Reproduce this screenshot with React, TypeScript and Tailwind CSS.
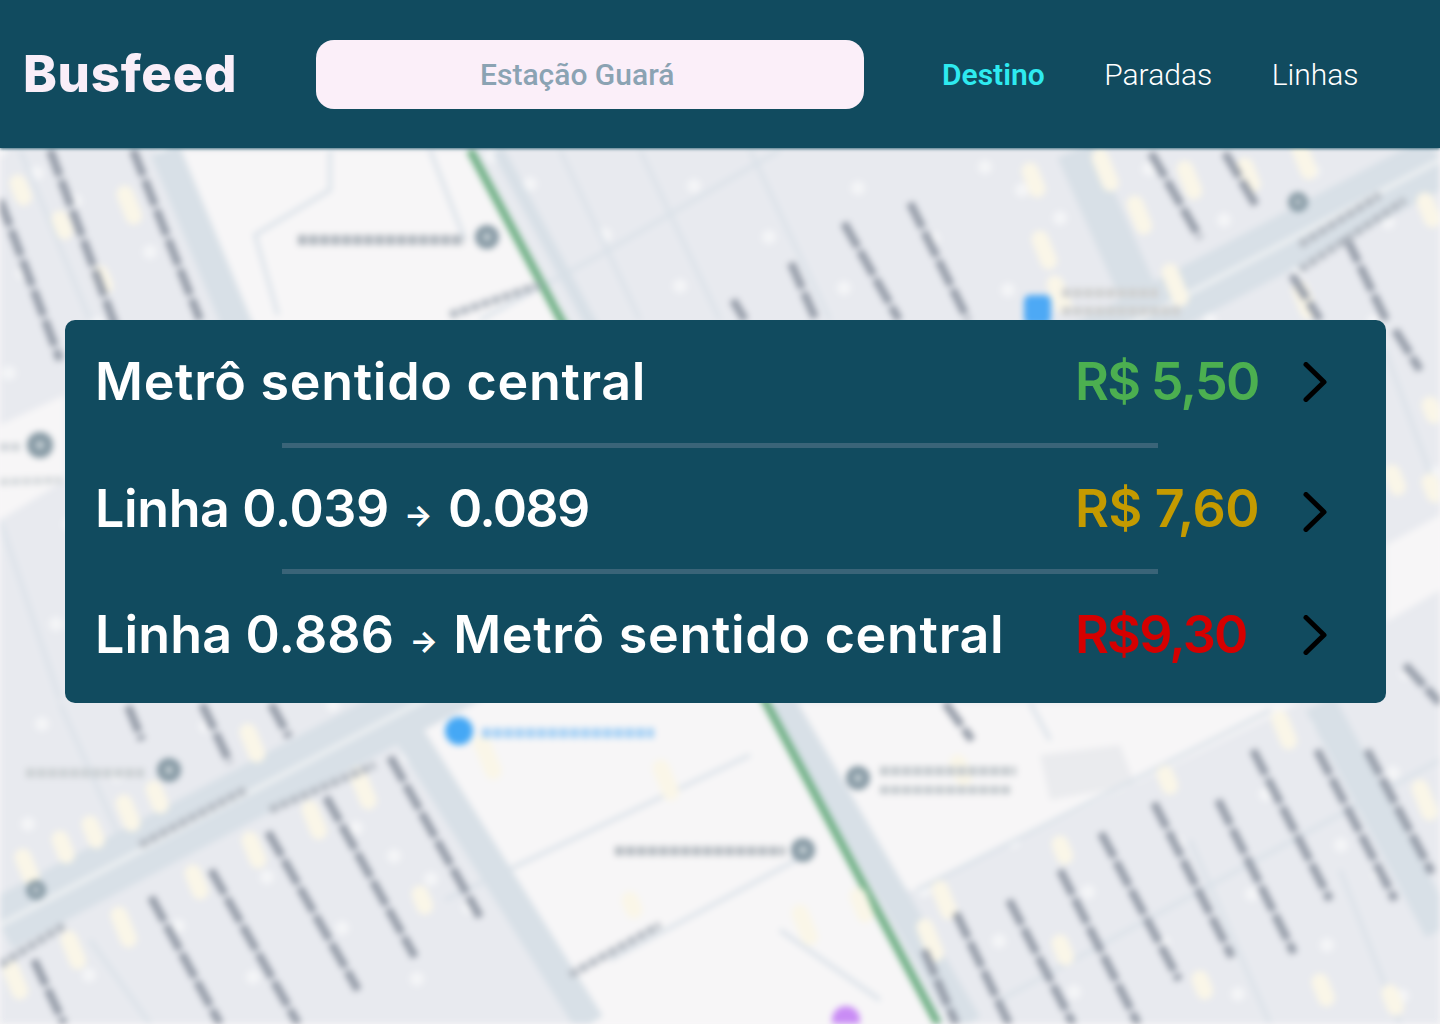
const darkLines = [
  [50, 150, 128, 360], [133, 150, 200, 320], [0, 200, 60, 360],
  [128, 706, 142, 740], [202, 704, 230, 763], [271, 704, 289, 737],
  [390, 757, 480, 917], [326, 797, 415, 957], [268, 832, 358, 990], [211, 870, 298, 1024],
  [151, 897, 220, 1024], [34, 960, 64, 1024],
  [945, 703, 972, 740], [1253, 750, 1330, 900], [1317, 750, 1395, 900], [1367, 750, 1432, 873],
  [1154, 803, 1232, 957], [1218, 800, 1294, 953], [1101, 833, 1179, 980], [1060, 870, 1138, 1024],
  [1009, 900, 1073, 1024], [956, 913, 1009, 1024], [924, 950, 956, 1024],
  [910, 203, 968, 320], [791, 263, 816, 320], [844, 223, 899, 320], [733, 300, 745, 320],
  [1151, 153, 1200, 238], [1225, 153, 1257, 207], [1346, 237, 1386, 320], [1292, 275, 1320, 320],
  [1395, 330, 1420, 370], [1405, 665, 1440, 703],
];

const thinRoads = [
  "M330 150 V190 L255 235 L278 315",
  "M430 150 L465 240",
  "M480 320 L600 255 L780 150",
  "M1271 710 L917 890",
  "M750 755 L445 900",
  "M815 850 L610 960",
  "M880 1000 L780 930",
  "M1030 703 L1050 740",
  "M1440 760 L1000 1000",
  "M560 150 L640 320",
  "M640 150 L720 320",
  "M750 150 L830 320",
  "M20 150 L90 320",
  "M60 704 L130 860",
  "M90 940 L150 1024",
  "M1190 840 L1270 1024",
  "M1340 870 L1400 1024",
  "M1385 350 L1440 500",
  "M0 520 L60 700",
];

const yellows = [
  [125, 205, 22], [18, 190, 14], [100, 280, 12], [60, 225, 12], [1030, 180, 18], [1040, 250, 22],
  [1055, 295, 22], [1100, 170, 26], [1135, 215, 22], [1170, 285, 26], [1185, 180, 22], [1245, 175, 18],
  [1300, 160, 22], [1425, 210, 18], [1300, 300, 22], [248, 743, 22], [124, 813, 20], [90, 832, 16],
  [60, 847, 16], [23, 867, 20], [154, 797, 16], [193, 882, 18], [310, 820, 22], [358, 788, 26],
  [250, 850, 20], [119, 927, 24], [69, 950, 22], [11, 980, 22], [482, 757, 28], [661, 780, 24],
  [958, 770, 14], [925, 940, 26], [940, 900, 22], [1060, 850, 12], [1165, 780, 12], [1280, 730, 22],
  [1420, 800, 24], [1392, 480, 14], [1430, 488, 12], [800, 925, 24], [858, 905, 18], [1060, 950, 14],
  [1200, 985, 12], [1320, 990, 16], [1390, 1000, 14], [630, 905, 10], [420, 900, 12], [1430, 410, 10],
];

// whitish flecks on the built up blocks, same spots on every render
const specks: number[][] = [];
for (let i = 0; i < 170; i++) {
  specks.push([(i * 197) % 1440, 150 + ((i * 353) % 874)]);
}

const labels = [
  [298, 240, 464, 240, 10, "#aeb5bc"],
  [1062, 293, 1158, 293, 9, "#cfd0d0"],
  [1062, 311, 1180, 311, 9, "#cfd0d0"],
  [26, 773, 144, 773, 9, "#cbd0d3"],
  [880, 771, 1016, 771, 9, "#c2c8cc"],
  [880, 790, 1012, 790, 8, "#c2c8cc"],
  [615, 851, 785, 851, 9, "#b3b9bf"],
  [0, 447, 20, 447, 8, "#cfd4d8"],
  [0, 482, 62, 480, 7, "#d4d8db"],
  [482, 733, 654, 733, 10, "#a6d1f6"],
  [1300, 245, 1380, 195, 8, "#b6bcc4"],
  [1300, 270, 1405, 200, 8, "#b6bcc4"],
  [140, 845, 245, 790, 8, "#b6bcc4"],
  [270, 810, 375, 765, 8, "#b6bcc4"],
  [0, 965, 65, 925, 8, "#b6bcc4"],
  [570, 975, 660, 925, 8, "#b6bcc4"],
  [450, 315, 540, 285, 8, "#b6bcc4"],
] as const;

const pins = [
  [487, 237, 12], [1298, 202, 10], [40, 445, 13], [169, 770, 12],
  [36, 890, 10], [858, 778, 12], [803, 850, 12],
];

const MapLayer = () => (
  <svg
    viewBox="0 0 1440 1024"
    className="absolute inset-0 w-[1440px] h-[1024px] blur-[3px]"
  >
    <rect width="1440" height="1024" fill="#e8eaef" />
    <g fill="#f4f5f7">
      {specks.map(([x, y], i) => (
        <circle key={i} cx={x} cy={y} r="7" />
      ))}
    </g>

    <g fill="#f7f6f7">
      <path d="M165 150H470L938 1024H590L400 720Z" />
      <path d="M790 703H1300L917 890H880Z" />
      <path d="M0 425L65 395V480L0 520Z" />
      <path d="M1386 545L1440 515V590L1386 622Z" />
    </g>
    <path d="M1040 755L1120 745L1135 785L1050 800Z" fill="#eaebee" />

    <g fill="none" stroke="#dbe2e9" strokeWidth="4">
      {thinRoads.map((d, i) => (
        <path key={i} d={d} />
      ))}
    </g>

    <g stroke="#d8e0e7" fill="none">
      <path d="M165 150L400 720L590 1024" strokeWidth="30" />
      <path d="M1440 160L0 925" strokeWidth="54" />
      <path d="M1075 150L1150 320" strokeWidth="38" />
      <path d="M1320 703L1440 930" strokeWidth="32" />
      <path d="M498 150L620 378" strokeWidth="12" />
      <path d="M780 700L968 1024" strokeWidth="28" />
    </g>
    <path d="M1440 160L0 925" stroke="#edf0f2" strokeWidth="5" />
    <path d="M470 150L938 1024" stroke="#6fb085" strokeWidth="8" />

    <g stroke="#faf6e8" strokeWidth="17" strokeLinecap="round">
      {yellows.map(([x, y, l], i) => (
        <line key={i} x1={x} y1={y - l / 2} x2={x + l * 0.4} y2={y + l / 2} />
      ))}
    </g>

    <g stroke="#959ca8" strokeWidth="8" strokeDasharray="28 4">
      {darkLines.map(([x1, y1, x2, y2], i) => (
        <line key={i} x1={x1} y1={y1} x2={x2} y2={y2} />
      ))}
    </g>

    {/* place names, unreadable in the blurred map */}
    <g strokeDasharray="9 2">
      {labels.map(([x1, y1, x2, y2, w, color], i) => (
        <line key={i} x1={x1} y1={y1} x2={x2} y2={y2} strokeWidth={w} stroke={color} />
      ))}
    </g>

    {pins.map(([x, y, r], i) => (
      <g key={i}>
        <circle cx={x} cy={y} r={r} fill="#8699a4" />
        <circle cx={x} cy={y} r={r / 3} fill="#c7d1d6" />
      </g>
    ))}
    <rect x="1024" y="295" width="27" height="30" rx="6" fill="#4da9f5" />
    <circle cx="459" cy="731" r="14" fill="#45a8f5" />
    <circle cx="846" cy="1020" r="14" fill="#c98cf5" />
  </svg>
);

const Chevron = ({ className }: { className: string }) => (
  <svg viewBox="0 0 24 40" className={`w-6 h-10 ${className}`}>
    <path
      d="M3 2.5L21 20L3 37.5"
      fill="none"
      stroke="#000"
      strokeWidth="5"
      strokeLinecap="round"
      strokeLinejoin="round"
    />
  </svg>
);

const Place = ({ children }: { children: string }) => (
  <span className="tracking-[0.7px]">{children}</span>
);

const Arrow = () => (
  <span className="inline-block w-[59px] text-center text-[30px] font-bold align-[1px]">→</span>
);

interface IRoute {
  title: React.ReactNode;
  price: string;
  color: string;
  height: string;
  chevron: string;
}

const routes: IRoute[] = [
  {
    title: <Place>Metrô sentido central</Place>,
    price: "R$ 5,50",
    color: "text-[#4caf50] tracking-[-1.7px]",
    height: "h-[123px]",
    chevron: "",
  },
  {
    title: (
      <>
        <span className="tracking-[-0.4px]">Linha 0.039</span>
        <Arrow />
        <span className="tracking-[-1.6px]">0.089</span>
      </>
    ),
    price: "R$ 7,60",
    color: "text-[#c49a00] tracking-[-0.4px]",
    height: "h-[121px]",
    chevron: "translate-y-[3px]",
  },
  {
    title: (
      <>
        <span className="tracking-[0.15px]">Linha 0.886</span>
        <Arrow />
        <Place>Metrô sentido central</Place>
      </>
    ),
    price: "R$9,30",
    color: "text-[#d50000] tracking-[-1.8px]",
    height: "h-[129px] pb-[7px]",
    chevron: "",
  },
];

const Row = ({ title, price, color, height, chevron }: IRoute) => (
  <div className={`flex items-center pl-[30px] ${height}`}>
    <div className="w-[980px] whitespace-nowrap">{title}</div>
    <div className={`w-[228px] whitespace-nowrap ${color}`}>{price}</div>
    <Chevron className={chevron} />
  </div>
);

export default function App() {
  return (
    <div className="relative w-full h-[1024px] overflow-hidden bg-[#f7f6f7]">
      <MapLayer />

      <header className="relative flex items-center h-[148px] pl-[23px] bg-[#114b5f] shadow-[0_1px_3px_rgba(17,75,95,0.8)]">
        <h1 className="w-[293px] font-['Inter',sans-serif] font-extrabold text-[51px] tracking-[0.7px] text-[#f9eef8]">
          Busfeed
        </h1>
        <div className="w-[548px] h-[69px] mt-px rounded-[18px] bg-[#fbeff9] flex items-center pl-[164px] font-['Roboto',sans-serif] font-medium text-[30px] text-[#8ba3b3]">
          Estação Guará
        </div>
        <nav className="flex items-center gap-[59.5px] ml-[78px] font-['Roboto',sans-serif] text-[30px]">
          <a className="font-semibold text-[#2eeaf0]">Destino</a>
          <a className="font-light text-white">Paradas</a>
          <a className="font-light text-white">Linhas</a>
        </nav>
      </header>

      <main className="relative mt-[172px] mx-[65px] w-[1321px] h-[383px] rounded-[10px] bg-[#114b5f] font-['Inter',sans-serif] font-semibold text-[52px] text-white">
        {routes.map((route, i) => (
          <div key={i}>
            {i > 0 && <div className="ml-[217px] w-[876px] h-[5px] bg-[#3a6478]" />}
            <Row {...route} />
          </div>
        ))}
      </main>
    </div>
  );
}
